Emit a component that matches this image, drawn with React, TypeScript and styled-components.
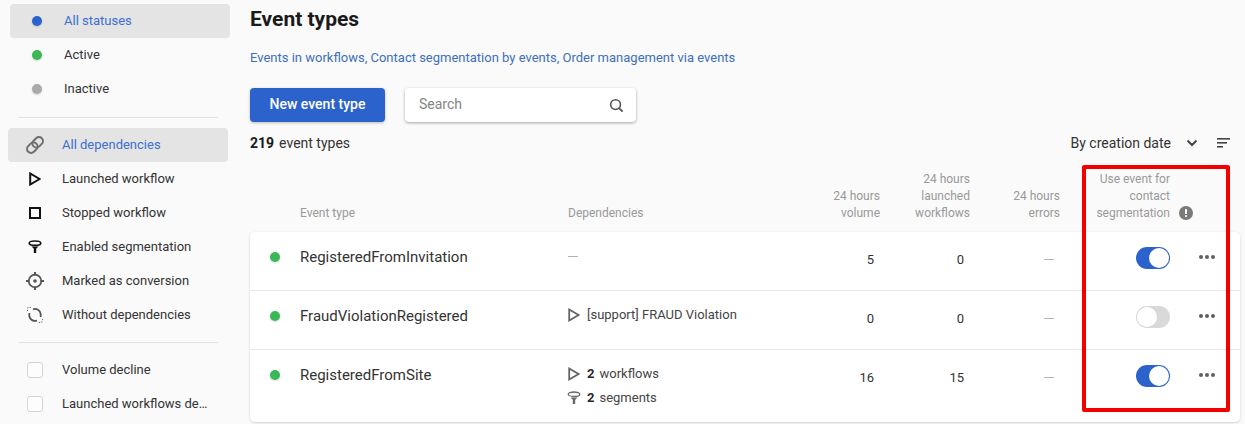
import React from 'react';
import styled, { createGlobalStyle } from 'styled-components';

const Global = createGlobalStyle`
  html, body { margin: 0; padding: 0; background: #fafafa; }
  body { font-family: Roboto, "Liberation Sans", sans-serif; font-size: 13px; color: #262626; }
`;

const Page = styled.div`
  position: relative;
  display: flex;
  width: 1245px;
  height: 424px;
  overflow: hidden;
`;

const Sidebar = styled.aside`
  flex: 0 0 250px;
  padding-top: 4px;
  box-sizing: border-box;
`;

const Group = styled.div<{ $left: number }>`
  margin-left: ${(p) => p.$left}px;
  width: 220px;
`;

const Item = styled.div<{ $active?: boolean }>`
  display: flex;
  align-items: center;
  height: 34px;
  border-radius: 4px;
  background: ${(p) => (p.$active ? '#e4e4e4' : 'transparent')};
  color: ${(p) => (p.$active ? '#3d6fd1' : '#333')};
  font-size: 13px;
  white-space: nowrap;
`;

const ItemLabel = styled.span`
  padding-bottom: 2px;
`;

const IconSlot = styled.span`
  flex: 0 0 54px;
  display: flex;
  justify-content: center;
`;

const Dot = styled.span<{ $color: string }>`
  display: block;
  width: 10px;
  height: 10px;
  border-radius: 50%;
  background: ${(p) => p.$color};
  box-shadow: 0 1px 2px rgba(0, 0, 0, 0.15);
`;

const Divider = styled.div<{ $top: number; $bottom: number }>`
  height: 1px;
  width: 200px;
  margin: ${(p) => p.$top}px 0 ${(p) => p.$bottom}px 18px;
  background: #e2e2e2;
`;

const Check = styled.span`
  display: block;
  width: 16px;
  height: 16px;
  box-sizing: border-box;
  border: 1px solid #d4d4d4;
  border-radius: 3px;
  background: #fdfdfd;
`;

const Main = styled.main`
  flex: 1;
  min-width: 0;
  padding-right: 5px;
`;

const Title = styled.h1`
  margin: 8px 0 0;
  font-size: 21px;
  line-height: 23px;
  font-weight: 700;
  color: #1a1a1a;
`;

const Links = styled.div`
  margin-top: 18px;
  font-size: 13px;
  line-height: 17px;
  color: #3d6fbd;
`;

const Actions = styled.div`
  display: flex;
  gap: 20px;
  margin-top: 22px;
`;

const PrimaryButton = styled.button`
  width: 135px;
  height: 34px;
  padding: 0 0 2px;
  border: 0;
  border-radius: 4px;
  background: #2c62cc;
  color: #fff;
  font: 500 14px Roboto, sans-serif;
  box-shadow: 0 1px 3px rgba(0, 0, 0, 0.25);
`;

const SearchBox = styled.div`
  display: flex;
  align-items: center;
  justify-content: space-between;
  width: 231px;
  height: 34px;
  padding: 0 12px 0 14px;
  box-sizing: border-box;
  border-radius: 4px;
  background: #fff;
  color: #858585;
  font-size: 14px;
  box-shadow: 0 1px 3px rgba(0, 0, 0, 0.35);
  span { padding-bottom: 2px; }
`;

const CountRow = styled.div`
  display: flex;
  align-items: center;
  justify-content: space-between;
  height: 20px;
  margin-top: 11px;
`;

const Count = styled.div`
  font-size: 14px;
  color: #333;
  b { font-weight: 700; color: #1a1a1a; margin-right: 5px; }
`;

const Sort = styled.div`
  display: flex;
  align-items: center;
  padding-right: 10px;
  font-size: 14px;
  color: #333;
  svg { display: block; }
`;

const SortChevron = styled.span`
  margin: 0 19px 0 15px;
`;

const Grid = styled.div`
  display: grid;
  grid-template-columns: 50px 268px 222px 90px 90px 90px 1fr;
  align-items: center;
`;

const HeadRow = styled(Grid)`
  align-items: end;
  height: 74px;
  padding-bottom: 10px;
  box-sizing: border-box;
  margin-top: 5px;
  font-size: 12px;
  line-height: 17px;
  color: #999;
`;

const HeadCell = styled.div<{ $right?: boolean }>`
  text-align: ${(p) => (p.$right ? 'right' : 'left')};
`;

const SegHead = styled.div`
  display: flex;
  align-items: flex-end;
  gap: 9px;
  text-align: right;
  svg { flex: none; margin-bottom: 2px; }
`;

const SegText = styled.div`
  width: 100px;
  margin-left: 10px;
`;

const Card = styled.section`
  height: 190px;
  border-radius: 5px;
  background: #fff;
  box-shadow: 0 1px 3px rgba(0, 0, 0, 0.16);
`;

const Row = styled(Grid)<{ $h: number }>`
  align-items: start;
  height: ${(p) => p.$h}px;
  box-sizing: border-box;
  border-bottom: 1px solid #e8e8e8;
  &:last-child { border-bottom: 0; }
`;

const StatusCell = styled.div`
  display: flex;
  justify-content: center;
  padding-top: 20px;
`;

const Name = styled.div`
  padding-top: 16px;
  font-size: 15px;
  line-height: 19px;
  color: #333;
`;

const Deps = styled.div`
  display: flex;
  flex-direction: column;
  gap: 6px;
  padding-top: 15px;
  font-size: 13px;
  line-height: 18px;
  color: #444;
`;

const DepLine = styled.div<{ $wideIcon?: boolean }>`
  display: flex;
  align-items: center;
  svg { flex: none; margin: ${(p) => (p.$wideIcon ? '0 6px 0 -1px' : '0 7px 0 0')}; }
  b { font-weight: 700; color: #262626; margin-right: 5px; }
`;

const Dash = styled.span`
  display: block;
  width: 10px;
  height: 1px;
  background: #b5b5b5;
`;

const DepDash = styled(Dash)`
  margin-top: 9px;
`;

const Num = styled.div`
  display: flex;
  justify-content: flex-end;
  align-items: center;
  padding: 18px 6px 0 0;
  height: 19px;
  font-size: 13px;
  color: #333;
`;

const ControlCell = styled.div`
  display: flex;
  align-items: center;
  justify-content: flex-end;
  padding: 15px 25px 0 0;
  gap: 29px;
`;

const Toggle = styled.span<{ $on: boolean }>`
  display: flex;
  justify-content: ${(p) => (p.$on ? 'flex-end' : 'flex-start')};
  width: 34px;
  height: 22px;
  box-sizing: border-box;
  padding: 1px;
  border-radius: 11px;
  background: ${(p) => (p.$on ? '#2c62cc' : '#d9d9d9')};
  &::after {
    content: '';
    width: 20px;
    height: 20px;
    border-radius: 50%;
    background: #fff;
  }
`;

const More = styled.span`
  display: flex;
  gap: 2px;
  width: 16px;
  margin-bottom: 2px;
  span {
    flex: none;
    width: 4px;
    height: 4px;
    border-radius: 50%;
    background: #5f5f5f;
  }
`;

const Highlight = styled.div`
  position: absolute;
  left: 1082px;
  top: 165px;
  width: 148px;
  height: 247px;
  box-sizing: border-box;
  border: 4px solid #f50000;
  border-radius: 2px;
  pointer-events: none;
`;

const LinkIcon = () => (
  <svg width="20" height="20" viewBox="0 0 20 20" fill="none" stroke="#6e6e6e" strokeWidth="2">
    <rect x="1.55" y="8.7" width="11.5" height="8" rx="4" transform="rotate(-45 7.3 12.7)" />
    <rect x="6.95" y="3.3" width="11.5" height="8" rx="4" transform="rotate(-45 12.7 7.3)" />
  </svg>
);

const PlayIcon = ({ color = '#111', weight = 2 }: { color?: string; weight?: number }) => (
  <svg width="12" height="14" viewBox="0 0 12 14" fill="none" stroke={color} strokeWidth={weight}>
    <path d="M1.2 1.5 V12.5 L10.6 7 Z" />
  </svg>
);

const StopIcon = () => (
  <svg width="12" height="12" viewBox="0 0 12 12" fill="none" stroke="#111" strokeWidth="2">
    <rect x="1" y="1" width="10" height="10" />
  </svg>
);

const FunnelIcon = ({ color = '#111', weight = 1.6 }: { color?: string; weight?: number }) => (
  <svg width="14" height="14" viewBox="0 0 14 14" fill="none">
    <ellipse cx="7" cy="3.2" rx="5.8" ry="2.2" stroke={color} strokeWidth={weight} />
    <path d="M3.5 6.5 H10.5 L8.2 8.8 V13 H5.8 V8.8 Z" fill={color} />
  </svg>
);

const TargetIcon = () => (
  <svg width="20" height="20" viewBox="0 0 20 20" fill="none" stroke="#555" strokeWidth="1.7">
    <circle cx="10" cy="10" r="6.3" />
    <path d="M10 1 V4.5 M10 15.5 V19 M1 10 H4.5 M15.5 10 H19" strokeWidth="2" />
    <circle cx="10" cy="10" r="1.8" fill="#555" stroke="none" />
  </svg>
);

const DashedLoopIcon = () => (
  <svg width="18" height="18" viewBox="0 0 18 18" fill="none" stroke="#555" strokeWidth="1.8">
    <path d="M7 3.3 A5.8 5.8 0 0 1 14.7 8 V11" />
    <path d="M11 14.6 A5.8 5.8 0 0 1 3.3 10 V7" />
    <path d="M1.5 1.5 L2.2 2.2 M4.2 1 L4.4 1.9 M1 4.3 L1.9 4.5 M16.3 16.3 L15.6 15.6 M13.7 16.8 L13.5 15.9 M16.8 13.7 L15.9 13.5" strokeWidth="1.2" />
  </svg>
);

const SearchIcon = () => (
  <svg width="15" height="15" viewBox="0 0 16 16" fill="none" stroke="#555" strokeWidth="1.7">
    <circle cx="7" cy="7" r="5.2" />
    <path d="M10.8 10.8 L14.5 14.5" strokeWidth="2" />
  </svg>
);

const ChevronIcon = () => (
  <svg width="12" height="8" viewBox="0 0 12 8" fill="none" stroke="#444" strokeWidth="2">
    <path d="M1.5 1.5 L6 6 L10.5 1.5" />
  </svg>
);

const SortIcon = () => (
  <svg width="13" height="12" viewBox="0 0 13 12" fill="#444">
    <rect x="0" y="1" width="13" height="1.6" />
    <rect x="0" y="5" width="10" height="1.6" />
    <rect x="0" y="9" width="6" height="1.6" />
  </svg>
);

const InfoIcon = () => (
  <svg width="14" height="14" viewBox="0 0 14 14">
    <circle cx="7" cy="7" r="7" fill="#7a7a7a" />
    <rect x="6" y="3" width="2" height="5" rx="0.6" fill="#fff" />
    <circle cx="7" cy="10" r="1.1" fill="#fff" />
  </svg>
);

const statuses = [
  { label: 'All statuses', color: '#2c62cc', active: true },
  { label: 'Active', color: '#38b955' },
  { label: 'Inactive', color: '#aaaaaa' },
];

const dependencies = [
  { label: 'All dependencies', icon: <LinkIcon />, active: true },
  { label: 'Launched workflow', icon: <PlayIcon /> },
  { label: 'Stopped workflow', icon: <StopIcon /> },
  { label: 'Enabled segmentation', icon: <FunnelIcon /> },
  { label: 'Marked as conversion', icon: <TargetIcon /> },
  { label: 'Without dependencies', icon: <DashedLoopIcon /> },
];

const rows = [
  {
    name: 'RegisteredFromInvitation',
    deps: <DepDash />,
    volume: '5',
    launched: '0',
    on: true,
    h: 59,
  },
  {
    name: 'FraudViolationRegistered',
    deps: (
      <DepLine>
        <PlayIcon color="#666" weight={1.8} />
        [support] FRAUD Violation
      </DepLine>
    ),
    volume: '0',
    launched: '0',
    on: false,
    h: 59,
  },
  {
    name: 'RegisteredFromSite',
    deps: (
      <>
        <DepLine>
          <PlayIcon color="#666" weight={1.8} />
          <b>2</b> workflows
        </DepLine>
        <DepLine $wideIcon>
          <FunnelIcon color="#666" weight={1.3} />
          <b>2</b> segments
        </DepLine>
      </>
    ),
    volume: '16',
    launched: '15',
    on: true,
    h: 72,
  },
];

export default function App() {
  return (
    <Page>
      <Global />
      <Sidebar>
        <Group $left={10}>
          {statuses.map((s) => (
            <Item key={s.label} $active={s.active}>
              <IconSlot>
                <Dot $color={s.color} />
              </IconSlot>
              <ItemLabel>{s.label}</ItemLabel>
            </Item>
          ))}
        </Group>
        <Divider $top={11} $bottom={10} />
        <Group $left={8}>
          {dependencies.map((d) => (
            <Item key={d.label} $active={d.active}>
              <IconSlot>{d.icon}</IconSlot>
              <ItemLabel>{d.label}</ItemLabel>
            </Item>
          ))}
        </Group>
        <Divider $top={10} $bottom={10} />
        <Group $left={8}>
          {['Volume decline', 'Launched workflows de…'].map((label) => (
            <Item key={label}>
              <IconSlot>
                <Check />
              </IconSlot>
              <ItemLabel>{label}</ItemLabel>
            </Item>
          ))}
        </Group>
      </Sidebar>
      <Main>
        <Title>Event types</Title>
        <Links>Events in workflows, Contact segmentation by events, Order management via events</Links>
        <Actions>
          <PrimaryButton>New event type</PrimaryButton>
          <SearchBox>
            <span>Search</span>
            <SearchIcon />
          </SearchBox>
        </Actions>
        <CountRow>
          <Count>
            <b>219</b>event types
          </Count>
          <Sort>
            By creation date
            <SortChevron>
              <ChevronIcon />
            </SortChevron>
            <SortIcon />
          </Sort>
        </CountRow>
        <HeadRow>
          <div />
          <HeadCell>Event type</HeadCell>
          <HeadCell>Dependencies</HeadCell>
          <HeadCell $right>
            24 hours
            <br />
            volume
          </HeadCell>
          <HeadCell $right>
            24 hours
            <br />
            launched
            <br />
            workflows
          </HeadCell>
          <HeadCell $right>
            24 hours
            <br />
            errors
          </HeadCell>
          <SegHead>
            <SegText>
              Use event for
              <br />
              contact
              <br />
              segmentation
            </SegText>
            <InfoIcon />
          </SegHead>
        </HeadRow>
        <Card>
          {rows.map((r) => (
            <Row key={r.name} $h={r.h}>
              <StatusCell>
                <Dot $color="#38b955" />
              </StatusCell>
              <Name>{r.name}</Name>
              <Deps>{r.deps}</Deps>
              <Num>{r.volume}</Num>
              <Num>{r.launched}</Num>
              <Num>
                <Dash />
              </Num>
              <ControlCell>
                <Toggle $on={r.on} />
                <More>
                  <span />
                  <span />
                  <span />
                </More>
              </ControlCell>
            </Row>
          ))}
        </Card>
      </Main>
      <Highlight />
    </Page>
  );
}
